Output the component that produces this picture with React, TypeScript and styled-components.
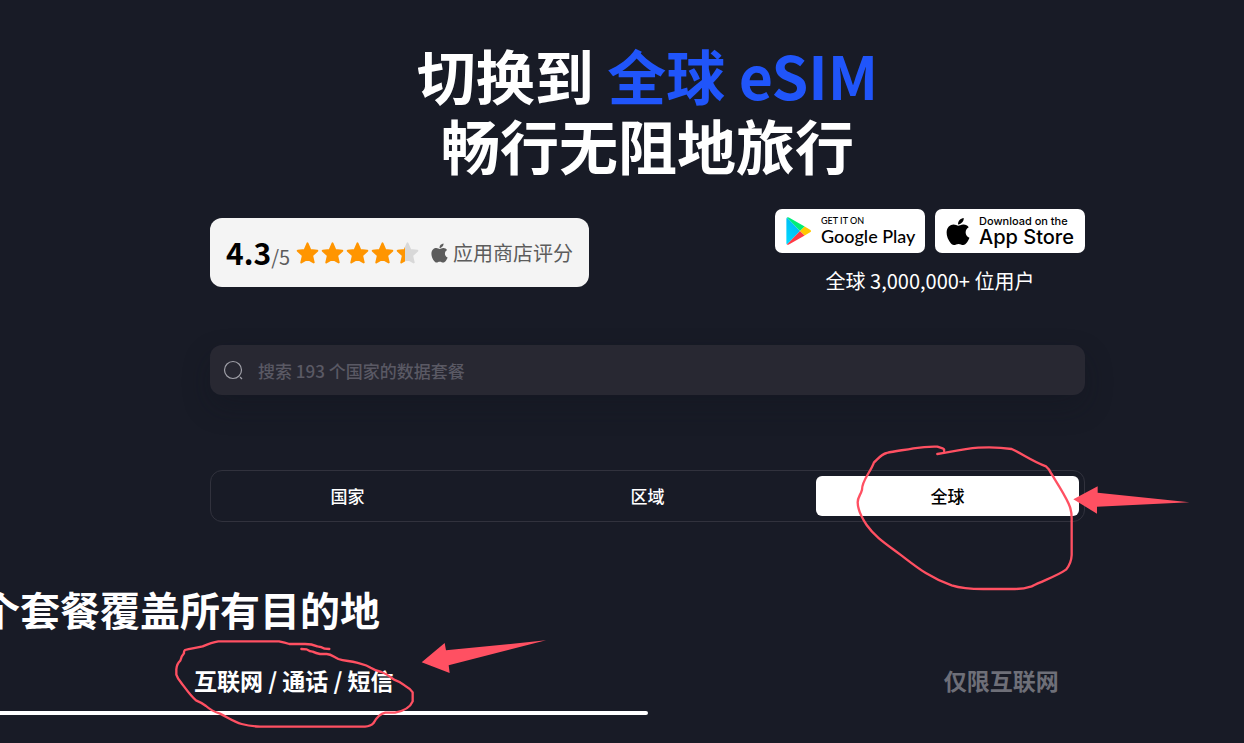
import React, { useState } from "react";
import styled, { createGlobalStyle, css } from "styled-components";
import { FaApple } from "react-icons/fa";

const GlobalStyle = createGlobalStyle`
  *, *::before, *::after { box-sizing: border-box; }
  body {
    margin: 0;
    background: #181b26;
    color: #ffffff;
    font-family: "Noto Sans CJK SC", "Noto Sans", sans-serif;
  }
  h1, h2, p { margin: 0; }
  button, input { font: inherit; color: inherit; border: 0; background: none; padding: 0; }
  button { cursor: pointer; }
`;

const Page = styled.div`
  overflow: hidden;
  min-height: 100vh;
`;

const Stage = styled.main`
  margin-right: -51px;
  padding: 40px 60px 28px;
`;

const Container = styled.div`
  max-width: 875px;
  margin: 0 auto;
`;

const Title = styled.h1`
  font-size: 59px;
  line-height: 70px;
  font-weight: 700;
  text-align: center;
`;

const Accent = styled.span`
  color: #2055fa;
`;

const ProofRow = styled.section`
  display: flex;
  align-items: center;
  justify-content: space-between;
  margin-top: 29px;
`;

const RatingCard = styled.div`
  display: flex;
  align-items: center;
  height: 69px;
  padding: 0 16px;
  border-radius: 12px;
  background: #f4f4f4;
  color: #5c5c5c;
  font-size: 20px;
`;

const Score = styled.span`
  display: flex;
  align-items: baseline;
  padding-top: 4px;
  line-height: 40px;
`;

const ScoreValue = styled.strong`
  font-size: 30px;
  color: #000000;
`;

const Stars = styled.svg`
  width: 125px;
  height: 24px;
  margin: 0 11px 0 5px;
`;

const RatingSource = styled.span`
  display: flex;
  align-items: center;
  gap: 5px;
`;

const AppleMark = styled(FaApple)<{ $width: number; $height: number }>`
  flex: none;
  width: ${(p) => p.$width}px;
  height: ${(p) => p.$height}px;
`;

const Downloads = styled.div`
  display: flex;
  flex-direction: column;
  gap: 14px;
`;

const Badges = styled.div`
  display: flex;
  gap: 10px;
`;

const Badge = styled.a`
  display: flex;
  align-items: center;
  width: 150px;
  height: 44px;
  padding-left: 11px;
  gap: 9px;
  border-radius: 7px;
  background: #ffffff;
  color: #000000;
  text-decoration: none;
`;

const BadgeText = styled.span<{ $family: string }>`
  display: flex;
  flex-direction: column;
  height: 32px;
  font-family: ${(p) => p.$family};
  font-weight: 500;
  white-space: nowrap;
`;

const BadgeSmall = styled.span<{ $size: number }>`
  font-size: ${(p) => p.$size}px;
  line-height: 12px;
`;

const BadgeLarge = styled.span<{ $size: number }>`
  font-size: ${(p) => p.$size}px;
  line-height: ${(p) => p.$size}px;
`;

const Users = styled.p`
  font-size: 20px;
  line-height: 28px;
  padding-bottom: 1px;
  font-weight: 400;
  text-align: center;
`;

const SearchBox = styled.label`
  display: flex;
  align-items: center;
  gap: 14px;
  height: 50px;
  margin-top: 49px;
  padding: 0 13px;
  border-radius: 12px;
  background: #282832;
  box-shadow: 0 12px 28px rgba(16, 20, 30, 0.3);
`;

const SearchInput = styled.input`
  flex: 1;
  min-width: 0;
  height: 50px;
  font-size: 17px;
  font-weight: 500;
  outline: none;
  &::placeholder { color: #5a5964; opacity: 1; }
`;

const SegmentArea = styled.div`
  position: relative;
  margin-top: 75px;
`;

const Segments = styled.div`
  display: grid;
  grid-template-columns: repeat(3, 1fr);
  gap: 37px;
  padding: 5px;
  border: 1px solid #31323d;
  border-radius: 12px;
`;

const Segment = styled.button<{ $active: boolean }>`
  height: 40px;
  padding-bottom: 2px;
  border-radius: 6px;
  font-size: 17px;
  font-weight: 500;
  ${(p) => p.$active && css`
    background: #ffffff;
    color: #000000;
  `}
`;

const Plans = styled.section`
  margin: 63px -120px 0;
`;

const PlansTitle = styled.h2`
  font-size: 40px;
  line-height: 48px;
  font-weight: 700;
`;

const PlanTabs = styled.div`
  position: relative;
  display: grid;
  grid-template-columns: 1fr 1fr;
  margin-top: 17px;
`;

const PlanTab = styled.button<{ $active: boolean }>`
  padding-top: 14px;
  font-size: 23px;
  line-height: 32px;
  font-weight: 700;
  color: ${(p) => (p.$active ? "#ffffff" : "#6e6f78")};

  &::after {
    content: "";
    display: block;
    height: 4px;
    margin-top: 15px;
    border-radius: 2px;
    background: ${(p) => (p.$active ? "#ffffff" : "transparent")};
  }
`;

const Ink = styled.svg`
  position: absolute;
  pointer-events: none;
  overflow: visible;
  fill: none;
  stroke: #ff5062;
  stroke-width: 7;
  stroke-linecap: round;
  stroke-linejoin: round;
`;

const SegmentInk = styled(Ink)`
  top: -35px;
  right: -115px;
  width: 360px;
  height: 165px;
`;

const PlanInk = styled(Ink)`
  top: -20px;
  left: 220px;
  width: 400px;
  height: 105px;
`;

const STAR =
  "M12.5 2.4 L15.4 9.1 L22.3 9.8 L17.1 14.5 L18.7 21.4 L12.5 17.8 L6.3 21.4 L7.9 14.5 L2.7 9.8 L9.6 9.1 Z";

function StarRow() {
  return (
    <Stars viewBox="0 0 125 24" role="img" aria-label="4.3 / 5">
      <defs>
        <linearGradient id="partial-star">
          <stop offset="38%" stopColor="#ff9500" />
          <stop offset="38%" stopColor="#d8d8d8" />
        </linearGradient>
      </defs>
      {[0, 1, 2, 3, 4].map((i) => {
        const paint = i === 4 ? "url(#partial-star)" : "#ff9500";
        return (
          <path
            key={i}
            d={STAR}
            transform={`translate(${i * 25} 0)`}
            fill={paint}
            stroke={paint}
            strokeWidth="2"
            strokeLinejoin="round"
          />
        );
      })}
    </Stars>
  );
}

function PlayLogo() {
  return (
    <svg width="26" height="30" viewBox="0 0 27 30" aria-hidden="true">
      <defs>
        <linearGradient id="play-blue" x1="0.8" y1="0" x2="0.2" y2="1">
          <stop offset="0" stopColor="#00b4f0" />
          <stop offset="1" stopColor="#00d8ff" />
        </linearGradient>
      </defs>
      <path d="M1 1 Q0.4 1.5 0.4 2.6 V27.4 Q0.4 28.5 1 29 L14.6 15 Z" fill="url(#play-blue)" />
      <path d="M1 1 Q1.8 0.4 3 1.1 L19.4 10.4 L14.6 15 Z" fill="#00ee76" />
      <path d="M1 29 Q1.8 29.6 3 28.9 L19.4 19.6 L14.6 15 Z" fill="#ff3a44" />
      <path d="M19.4 10.4 L25 13.6 Q27 15 25 16.4 L19.4 19.6 L14.6 15 Z" fill="#ffc800" />
    </svg>
  );
}

function SearchIcon() {
  return (
    <svg width="21" height="21" viewBox="0 0 21 21" fill="none" stroke="#a0a0a8" aria-hidden="true">
      <circle cx="10" cy="10" r="8.5" strokeWidth="1.2" />
      <path d="M17 17 L19 19" strokeWidth="1.3" />
    </svg>
  );
}

const REGIONS = ["国家", "区域", "全球"];
const PLANS = ["互联网 / 通话 / 短信", "仅限互联网"];

export default function App() {
  const [region, setRegion] = useState(2);
  const [plan, setPlan] = useState(0);

  return (
    <Page>
      <GlobalStyle />
      <Stage>
        <Container>
          <Title>
            切换到 <Accent>全球 eSIM</Accent>
            <br />
            畅行无阻地旅行
          </Title>

          <ProofRow>
            <RatingCard>
              <Score>
                <ScoreValue>4.3</ScoreValue>/5
              </Score>
              <StarRow />
              <RatingSource>
                <AppleMark $width={17} $height={22} aria-hidden="true" />
                应用商店评分
              </RatingSource>
            </RatingCard>

            <Downloads>
              <Badges>
                <Badge href="#google-play">
                  <PlayLogo />
                  <BadgeText $family='Lato, "Open Sans", sans-serif'>
                    <BadgeSmall $size={9}>GET IT ON</BadgeSmall>
                    <BadgeLarge $size={18}>Google Play</BadgeLarge>
                  </BadgeText>
                </Badge>
                <Badge href="#app-store">
                  <AppleMark $width={24} $height={31} aria-hidden="true" />
                  <BadgeText $family='Inter, "Liberation Sans", sans-serif'>
                    <BadgeSmall $size={11}>Download on the</BadgeSmall>
                    <BadgeLarge $size={20}>App Store</BadgeLarge>
                  </BadgeText>
                </Badge>
              </Badges>
              <Users>全球 3,000,000+ 位用户</Users>
            </Downloads>
          </ProofRow>

          <SearchBox>
            <SearchIcon />
            <SearchInput
              type="text"
              aria-label="搜索"
              placeholder="搜索 193 个国家的数据套餐"
            />
          </SearchBox>

          <SegmentArea>
            <Segments role="tablist">
              {REGIONS.map((name, i) => (
                <Segment
                  key={name}
                  type="button"
                  role="tab"
                  aria-selected={region === i}
                  $active={region === i}
                  onClick={() => setRegion(i)}
                >
                  {name}
                </Segment>
              ))}
            </Segments>
            <SegmentInk viewBox="0 0 1080 495" aria-hidden="true">
              <path d="M292 57 C340 49 370 42 415 38 Q470 35 515 42 C550 58 575 78 618 94 Q628 102 634 116 C655 150 672 175 686 206 Q695 225 695 250 V360 Q694 385 678 404 C650 424 615 434 575 454 Q550 462 525 462 H430 Q370 462 335 451 C265 427 225 392 180 358 C140 328 105 306 80 270 C62 243 53 225 53 202 C53 186 62 180 66 164 C66 135 90 115 102 82 C113 72 125 57 140 54 C165 47 190 46 220 40 Q260 34 292 35 L308 40 Q314 42 312 48" />
              <path d="M700 193 L773 154 V173 L1048 202 L771 215 V236 Z" fill="#ff5062" stroke="none" />
            </SegmentInk>
          </SegmentArea>
        </Container>

        <Plans>
          <PlansTitle>一个套餐覆盖所有目的地</PlansTitle>
          <PlanTabs role="tablist">
            {PLANS.map((name, i) => (
              <PlanTab
                key={name}
                type="button"
                role="tab"
                aria-selected={plan === i}
                $active={plan === i}
                onClick={() => setPlan(i)}
              >
                {name}
              </PlanTab>
            ))}
            <PlanInk viewBox="0 0 1200 315" aria-hidden="true">
              <path d="M508 57 L494 56 Q484 50 472 49 Q455 42 435 42 H388 Q375 38 357 34 H175 Q155 37 128 49 C110 54 92 55 75 60 Q71 64 72 70 Q63 80 61 92 Q50 102 49 118 V134 Q52 144 62 156 C80 180 92 198 108 211 Q125 218 138 228 C150 239 165 246 180 251 C205 263 220 275 245 282 Q270 289 300 290 H615 Q632 289 640 280 C648 265 658 252 676 248 H705 C730 243 750 234 758 214 V187 Q750 175 735 167 Q720 155 702 149 C690 140 680 132 664 126 Q645 121 632 113 C615 102 605 103 590 98 C570 92 555 94 535 87 C520 80 515 73 500 72 H480 Q468 70 458 65 Q450 65 440 58 L424 57" />
              <path d="M785 97 L854 39 L858 61 L1158 31 L866 106 L869 129 Z" fill="#ff5062" stroke="none" />
            </PlanInk>
          </PlanTabs>
        </Plans>
      </Stage>
    </Page>
  );
}
